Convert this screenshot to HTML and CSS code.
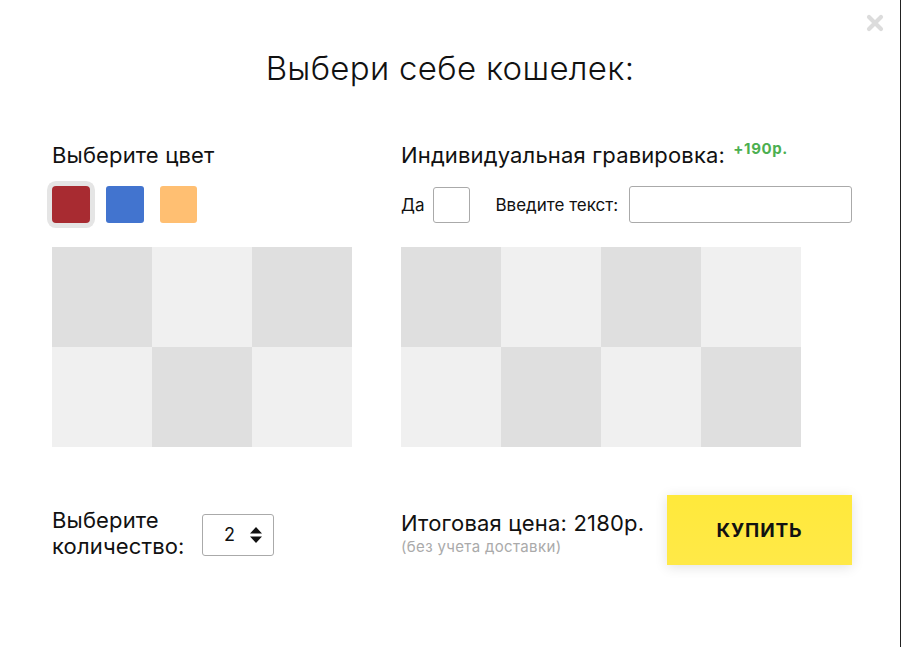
FILE: index.html
```html
<!DOCTYPE html>
<html lang="ru">
<head>
<meta charset="utf-8">
<title>Кошелек</title>
<link rel="stylesheet" href="styles.css">
</head>
<body>
<div class="modal">
  <button class="close" aria-label="Закрыть">
    <svg width="18" height="18" viewBox="0 0 18 18"><path d="M3 3 L15 15 M15 3 L3 15" stroke="#dcdcdc" stroke-width="4.2" stroke-linecap="round"/></svg>
  </button>
  <h1 class="title">Выбери себе кошелек:</h1>
  <div class="top">
    <section class="col-left">
      <h2 class="heading">Выберите цвет</h2>
      <div class="swatches">
        <span class="swatch red selected"></span>
        <span class="swatch blue"></span>
        <span class="swatch orange"></span>
      </div>
      <div class="grid grid3">
        <span class="c d"></span><span class="c l"></span><span class="c d"></span>
        <span class="c l"></span><span class="c d"></span><span class="c l"></span>
      </div>
    </section>
    <section class="col-right">
      <h2 class="heading">Индивидуальная гравировка: <span class="extra">+190р.</span></h2>
      <div class="engrave">
        <label class="yes">Да</label>
        <span class="checkbox"></span>
        <label class="enter">Введите текст:</label>
        <span class="textinput"></span>
      </div>
      <div class="grid grid4">
        <span class="c d"></span><span class="c l"></span><span class="c d"></span><span class="c l"></span>
        <span class="c l"></span><span class="c d"></span><span class="c l"></span><span class="c d"></span>
      </div>
    </section>
  </div>
  <div class="bottom">
    <div class="qty">
      <div class="qty-label">Выберите<br>количество:</div>
      <div class="select">
        <span class="val">2</span>
        <svg class="arrows" width="12" height="16" viewBox="0 0 12 16"><path d="M6 0 L12 6.5 L0 6.5 Z M0 9.5 L12 9.5 L6 16 Z" fill="#111"/></svg>
      </div>
    </div>
    <div class="price">
      <div class="price-main">Итоговая цена: 2180р.</div>
      <div class="price-note">(без учета доставки)</div>
    </div>
    <button class="buy">КУПИТЬ</button>
  </div>
</div>
</body>
</html>
```
FILE: styles.css
```css
* { box-sizing: border-box; }
html, body { margin: 0; padding: 0; background: #fff; }
body { font-family: Inter, "Liberation Sans", Arial, sans-serif; color: #111; }

.modal {
  position: relative;
  width: 901px;
  height: 647px;
  border-right: 1px solid #222;
  background: #fff;
}

.close {
  position: absolute;
  top: 14px;
  right: 16px;
  width: 18px;
  height: 18px;
  padding: 0;
  border: 0;
  background: none;
}
.close svg { display: block; }

.title {
  margin: 0;
  padding-top: 46px;
  text-align: center;
  font-family: Inter, "Liberation Sans", sans-serif;
  font-weight: 300;
  font-size: 33px;
  letter-spacing: 0.3px;
  line-height: 44px;
  color: #111;
}

.top {
  display: flex;
  padding-left: 52px;
  margin-top: 53px;
}
.col-left { width: 300px; }
.col-right { margin-left: 49px; }

.heading {
  margin: 0;
  font-weight: 400;
  font-size: 22px;
  letter-spacing: 0.15px;
  line-height: 24px;
  height: 24px;
  white-space: nowrap;
}
.extra {
  position: relative;
  top: -9px;
  font-size: 15px;
  letter-spacing: 0.6px;
  font-weight: 700;
  color: #4caf50;
  margin-left: 2px;
}

.swatches {
  display: flex;
  gap: 16px;
  margin-top: 19px;
  height: 37px;
}
.swatch {
  width: 38px;
  height: 37px;
  border-radius: 3px;
}
.swatch.selected { box-shadow: 0 0 0 5px #e5e5e5; border-radius: 4px; }
.red { background: #a82b31; }
.blue { background: #4274cf; }
.orange { background: #ffbf72; width: 37px; }

.engrave {
  display: flex;
  align-items: center;
  margin-top: 19px;
  height: 37px;
}
.yes { font-size: 17px; }
.checkbox {
  width: 37px;
  height: 36px;
  border: 1px solid #aaa;
  border-radius: 3px;
  margin-left: 9px;
}
.enter { font-size: 17px; margin-left: 25px; }
.textinput {
  width: 223px;
  height: 37px;
  border: 1px solid #aaa;
  border-radius: 3px;
  margin-left: 11px;
}

.grid {
  display: grid;
  grid-auto-rows: 100px;
  margin-top: 24px;
}
.grid3 { grid-template-columns: repeat(3, 100px); }
.grid4 { grid-template-columns: repeat(4, 100px); }
.c.d { background: #dfdfdf; }
.c.l { background: #f0f0f0; }

.bottom {
  display: flex;
  align-items: center;
  padding-left: 52px;
  margin-top: 48px;
  height: 70px;
}
.qty {
  display: flex;
  align-items: center;
  width: 349px;
  padding-top: 9px;
}
.qty-label {
  width: 150px;
  font-size: 22px;
  letter-spacing: 0.15px;
  line-height: 26px;
  margin-top: -3px;
}
.select {
  display: flex;
  align-items: center;
  width: 72px;
  height: 42px;
  border: 1px solid #aaa;
  border-radius: 3px;
  padding-left: 21px;
}
.val { font-size: 18px; }
.arrows { margin-left: 15px; }

.price { width: 266px; padding-top: 6px; }
.price-main { font-size: 22px; letter-spacing: 0.2px; line-height: 24px; }
.price-note { font-size: 15px; letter-spacing: 0.35px; line-height: 18px; color: #aaa; margin-top: 3px; }

.buy {
  width: 185px;
  height: 70px;
  border: 0;
  background: linear-gradient(#ffe93b, #ffe948);
  box-shadow: 0 2px 12px rgba(0,0,0,0.12);
  font-family: Inter, "Liberation Sans", Arial, sans-serif;
  font-weight: 700;
  font-size: 19px;
  letter-spacing: 0.9px;
  color: #111;
}
```
